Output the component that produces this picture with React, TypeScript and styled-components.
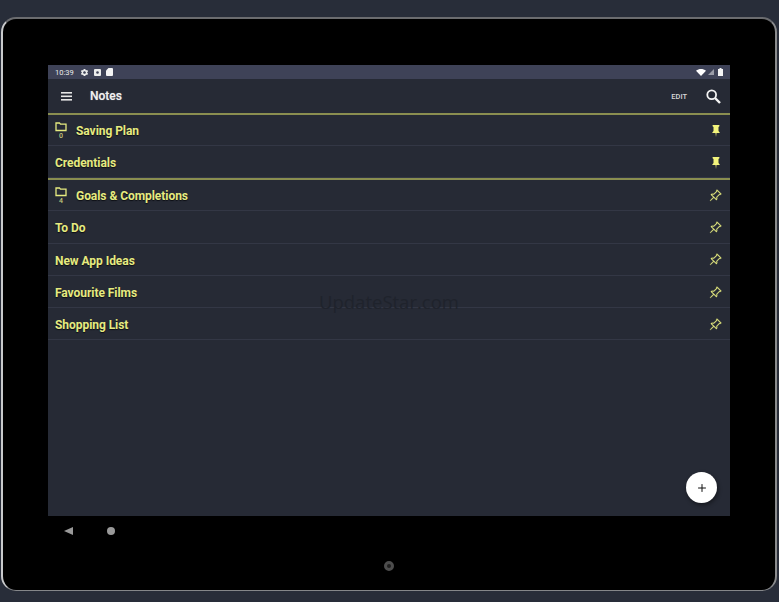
import React from 'react';
import styled, { createGlobalStyle } from 'styled-components';
import { BsPinAngle } from 'react-icons/bs';
import { MdSettings } from 'react-icons/md';
import { Plus } from 'lucide-react';

const GlobalStyle = createGlobalStyle`
html, body {
  margin: 0;
  width: 779px;
  height: 602px;
  overflow: hidden;
  background: #282d39;
  font-family: Roboto, "Liberation Sans", sans-serif;
}
`;

const Page = styled.div`
  width: 779px;
  height: 602px;
  box-sizing: border-box;
  padding: 17px 2px 11px 1px;
`;

const Tablet = styled.div`
  position: relative;
  height: 100%;
  box-sizing: border-box;
  padding: 46px 45px 0 45px;
  background: #000;
  border-radius: 15px;
  border-style: solid;
  border-width: 2px 2px 1px 2px;
  border-color: #6b6c6f #8a8b8d #85878a #c9cacc;
`;

const Screen = styled.div`
  position: relative;
  height: 451px;
  display: flex;
  flex-direction: column;
  background: #262a35;
`;

const StatusBar = styled.div`
  height: 14px;
  flex: none;
  display: flex;
  align-items: center;
  justify-content: space-between;
  padding: 0 7px;
  background: #3e4257;
  color: #eceded;
  font-size: 7.5px;
`;

const StatusGroup = styled.div<{ $tight?: boolean }>`
  display: flex;
  align-items: center;
  gap: ${(p) => (p.$tight ? '2px' : '5px')};
`;

const Time = styled.span`
  margin-right: 1px;
`;

const BatterySlot = styled.span`
  margin-left: 2px;
  display: flex;
`;

const AppBar = styled.header`
  height: 34px;
  flex: none;
  display: flex;
  align-items: center;
  padding: 0 9px 0 13px;
  color: #f0f0f0;
`;

const Title = styled.h1`
  margin: 0 0 0 18px;
  flex: 1;
  font-size: 12px;
  font-weight: 500;
  text-shadow: 0 0 1px #9a9a9a;
`;

const EditLabel = styled.span`
  margin-right: 19px;
  font-size: 7.5px;
  font-weight: 500;
  color: #d8d8d8;
`;

const List = styled.ul`
  margin: 0;
  padding: 0;
  list-style: none;
`;

const Row = styled.li<{ $section?: boolean }>`
  height: ${(p) => (p.$section ? '33px' : '32.3px')};
  box-sizing: border-box;
  display: flex;
  align-items: center;
  padding: ${(p) => (p.$section ? '2px' : '3px')} 8px 0 7px;
  border-top: ${(p) => (p.$section ? '2px solid #8a8e50' : 'none')};
  border-bottom: 1px solid #333745;
  color: #e6eb80;
`;

const RowName = styled.span`
  flex: 1;
  font-size: 12px;
  font-weight: 700;
  letter-spacing: -0.05px;
  text-shadow: 0 1px 1px #0c0e14;
`;

const FolderBox = styled.span`
  width: 12px;
  margin-right: 9px;
  display: flex;
  flex-direction: column;
  align-items: center;
`;

const FolderCount = styled.span`
  margin-top: 1px;
  font-size: 7px;
  line-height: 7px;
  font-weight: 500;
  color: #c4c87e;
`;

const PinSlot = styled.span`
  width: 13px;
  display: flex;
  justify-content: center;
  color: #e6eb80;
`;

const OutlinePin = styled(BsPinAngle)`
  margin-bottom: 2px;
  stroke-width: 0.3px;
`;

const Watermark = styled.div`
  position: absolute;
  top: 224px;
  left: 271px;
  font-family: "Open Sans", sans-serif;
  font-size: 18.5px;
  color: #1f232c;
`;

const Fab = styled.button`
  position: absolute;
  right: 13px;
  bottom: 13px;
  width: 31px;
  height: 31px;
  padding: 0;
  display: flex;
  align-items: center;
  justify-content: center;
  border: none;
  border-radius: 50%;
  background: #fff;
  color: #111;
  box-shadow: 1px 2px 4px rgba(0, 0, 0, 0.45);
`;

const NavBar = styled.nav`
  height: 29px;
  display: flex;
  align-items: center;
  padding-left: 16px;
  gap: 34px;
`;

const Back = styled.span`
  width: 0;
  height: 0;
  border-style: solid;
  border-width: 4.5px 9px 4.5px 0;
  border-color: transparent #999 transparent transparent;
`;

const Home = styled.span`
  width: 8px;
  height: 8px;
  border-radius: 50%;
  background: #999;
`;

const Camera = styled.span`
  position: absolute;
  left: 381px;
  top: 542px;
  width: 10px;
  height: 10px;
  box-sizing: border-box;
  border: 3px solid #4d4d4d;
  border-radius: 50%;
  background: #1f1f1f;
`;

function MenuIcon() {
  return (
    <svg width="11" height="9" viewBox="0 0 11 9" fill="#e6e6e6">
      <rect y="0" width="11" height="1.6" />
      <rect y="3.5" width="11" height="1.6" />
      <rect y="7" width="11" height="1.6" />
    </svg>
  );
}

function SearchIcon() {
  return (
    <svg width="15" height="15" viewBox="0 0 15 15" fill="none" stroke="#f4f4f4">
      <circle cx="5.700" cy="5.700" r="4.400" strokeWidth="1.800" />
      <path d="M9 9l5 5" strokeWidth="2.400" />
    </svg>
  );
}

function FolderIcon() {
  return (
    <svg width="12" height="10" viewBox="0 0 12 10" fill="none" stroke="#e6eb80" strokeWidth="1.300">
      <path d="M1 8.500V1h3.500l1 1.200H11v6.300z" />
    </svg>
  );
}

function PinnedIcon() {
  return (
    <svg width="8" height="12" viewBox="0 0 8 12" fill="#f3f47c">
      <path d="M.6 0h6.800v1.200L6.500 2v4l1.200 1.400V8H4.500L4 12l-.5-4H.3v-.6L1.500 6V2L.6 1.200z" />
    </svg>
  );
}

function ScreenshotIcon() {
  return (
    <svg width="7" height="7" viewBox="0 0 7 7">
      <rect width="7" height="7" rx="1" fill="#eceded" />
      <circle cx="3.500" cy="3.500" r="1.300" fill="#3e4257" />
    </svg>
  );
}

function SdIcon() {
  return (
    <svg width="7" height="8" viewBox="0 0 7 8" fill="#f4f4f4">
      <path d="M2.500 0H6a1 1 0 0 1 1 1v6a1 1 0 0 1-1 1H1a1 1 0 0 1-1-1V2.500z" />
    </svg>
  );
}

function WifiIcon() {
  return (
    <svg width="10" height="7" viewBox="0 0 10 7" fill="#fff">
      <path d="M0 1.800C2.800-.6 7.200-.6 10 1.800L5 7z" />
    </svg>
  );
}

function SignalIcon() {
  return (
    <svg width="6" height="6" viewBox="0 0 6 6" fill="#9a9ca8">
      <path d="M6 0v6H0z" />
    </svg>
  );
}

function BatteryIcon() {
  return (
    <svg width="5" height="8" viewBox="0 0 5 8" fill="#f4f4f4">
      <path d="M1.500 0h2v1H5v7H0V1h1.500z" />
    </svg>
  );
}

type Note = { name: string; pinned?: boolean; count?: number; section?: boolean };

const notes: Note[] = [
  { name: 'Saving Plan', pinned: true, count: 0, section: true },
  { name: 'Credentials', pinned: true },
  { name: 'Goals & Completions', count: 4, section: true },
  { name: 'To Do' },
  { name: 'New App Ideas' },
  { name: 'Favourite Films' },
  { name: 'Shopping List' },
];

export default function App() {
  return (
    <Page>
      <GlobalStyle />
      <Tablet>
        <Screen>
          <StatusBar>
            <StatusGroup>
              <Time>10:39</Time>
              <MdSettings size={9} />
              <ScreenshotIcon />
              <SdIcon />
            </StatusGroup>
            <StatusGroup $tight>
              <WifiIcon />
              <SignalIcon />
              <BatterySlot>
                <BatteryIcon />
              </BatterySlot>
            </StatusGroup>
          </StatusBar>
          <AppBar>
            <MenuIcon />
            <Title>Notes</Title>
            <EditLabel>EDIT</EditLabel>
            <SearchIcon />
          </AppBar>
          <List>
            {notes.map((note) => (
              <Row key={note.name} $section={note.section}>
                {note.count !== undefined && (
                  <FolderBox>
                    <FolderIcon />
                    <FolderCount>{note.count}</FolderCount>
                  </FolderBox>
                )}
                <RowName>{note.name}</RowName>
                <PinSlot>{note.pinned ? <PinnedIcon /> : <OutlinePin size={13} />}</PinSlot>
              </Row>
            ))}
          </List>
          <Watermark>UpdateStar.com</Watermark>
          <Fab aria-label="Add note">
            <Plus size={12} strokeWidth={2} />
          </Fab>
        </Screen>
        <NavBar>
          <Back />
          <Home />
        </NavBar>
        <Camera />
      </Tablet>
    </Page>
  );
}
